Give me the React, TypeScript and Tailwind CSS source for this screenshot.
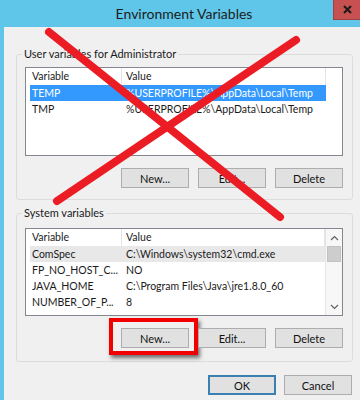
const UI = { fontFamily: 'Lato, "Noto Sans", sans-serif' };

type Row = { name: string; value: string; tone?: "selected" | "hover" };

const userRows: Row[] = [
  { name: "TEMP", value: "%USERPROFILE%\\AppData\\Local\\Temp", tone: "selected" },
  { name: "TMP", value: "%USERPROFILE%\\AppData\\Local\\Temp" },
];

const systemRows: Row[] = [
  { name: "ComSpec", value: "C:\\Windows\\system32\\cmd.exe", tone: "hover" },
  { name: "FP_NO_HOST_C...", value: "NO" },
  { name: "JAVA_HOME", value: "C:\\Program Files\\Java\\jre1.8.0_60" },
  { name: "NUMBER_OF_P...", value: "8" },
];

function WinButton({ label, focused, highlight }: { label: string; focused?: boolean; highlight?: boolean }) {
  return (
    <div className="relative shrink-0">
      <button
        className={
          "block h-[20px] w-[68px] bg-[#e1e1e1] text-[11px] leading-none text-[#111] " +
          (focused ? "border-2 border-[#3c7fb1]" : "border border-[#adadad]")
        }
        style={UI}
      >
        {label}
      </button>
      {highlight && (
        <div className="absolute -left-[12px] -top-[10px] -right-[9px] -bottom-[7px] border-[4px] border-[#f20000] shadow-[2px_3px_4px_rgba(0,0,0,0.55)]" />
      )}
    </div>
  );
}

function ListView({ rows, height, scroll }: { rows: Row[]; height: string; scroll?: boolean }) {
  return (
    <div className={"flex shrink-0 overflow-hidden border border-[#828790] bg-white " + height} style={UI}>
      <div className="flex-1 min-w-0">
        <div className="flex h-[17px] text-[10.5px] leading-[17px] text-[#1a1a1a]">
          <div className="w-[96px] shrink-0 pl-[6px] border-r border-[#e5e5e5]">Variable</div>
          <div className="flex-1 pl-[4px] border-r border-[#e5e5e5]">Value</div>
          {!scroll && <div className="w-[16px] shrink-0" />}
        </div>
        {rows.map((r) => (
          <div
            key={r.name}
            className={
              "flex h-[16px] ml-[4px] text-[10.5px] leading-[16px] " +
              (scroll ? "" : "mr-[16px] ") +
              (r.tone === "selected"
                ? "bg-[#3399ff] text-white"
                : r.tone === "hover"
                  ? "bg-[#e8e8e8] text-[#1a1a1a]"
                  : "text-[#1a1a1a]")
            }
          >
            <div className="w-[92px] shrink-0 overflow-hidden pl-[2px] whitespace-nowrap">{r.name}</div>
            <div className="flex-1 min-w-0 overflow-hidden pl-[4px] whitespace-nowrap">{r.value}</div>
          </div>
        ))}
      </div>
      {scroll && (
        <div className="w-[17px] shrink-0 flex flex-col bg-[#f7f7f7] border-l border-[#e5e5e5]">
          <div className="h-[17px] flex items-center justify-center">
            <svg width="9" height="6" viewBox="0 0 9 6">
              <path d="M1 5 L4.5 1.5 L8 5" fill="none" stroke="#606060" strokeWidth="1.2" />
            </svg>
          </div>
          <div className="h-[16px] mx-[1px] bg-[#cdcdcd] border border-[#c2c2c2]" />
          <div className="flex-1" />
          <div className="h-[17px] flex items-center justify-center">
            <svg width="9" height="6" viewBox="0 0 9 6">
              <path d="M1 1 L4.5 4.5 L8 1" fill="none" stroke="#606060" strokeWidth="1.2" />
            </svg>
          </div>
        </div>
      )}
    </div>
  );
}

function GroupBox({ title, children, className }: { title: string; children: React.ReactNode; className?: string }) {
  return (
    <div className={"relative shrink-0 rounded-[3px] border border-[#dcdcdc] pl-[8px] pr-[9px] " + (className ?? "")}>
      <span
        className="absolute -top-[8px] left-[5px] bg-[#f0f0f0] px-[2px] text-[11px] leading-[14px] text-[#1a1a1a]"
        style={UI}
      >
        {title}
      </span>
      {children}
    </div>
  );
}

export default function App() {
  return (
    <div className="relative flex h-[400px] w-[360px] flex-col overflow-hidden bg-[#5fc6e9]">
      {/* Title bar */}
      <div className="relative flex h-[27px] shrink-0 items-center justify-center pl-[8px]">
        <span className="text-[14px] text-[#1c1c1c]" style={UI}>
          Environment Variables
        </span>
        <div className="absolute right-0 top-0 flex h-[20px] w-[27px] items-center justify-center border-l border-b border-[#a34040] bg-[#c75050]">
          <svg width="9" height="9" viewBox="0 0 9 9">
            <path d="M1 1 L8 8 M8 1 L1 8" stroke="#1a1a1a" strokeWidth="2" />
          </svg>
        </div>
      </div>

      {/* Body */}
      <div className="ml-[4px] flex flex-1 flex-col bg-[#f0f0f0] pl-[12px] pr-[7px] pt-[27px]">
        <GroupBox title="User variables for Administrator" className="pt-[12px] pb-[11px]">
          <ListView rows={userRows} height="h-[89px]" />
          <div className="mt-[12px] flex justify-end gap-[9px]">
            <WinButton label="New..." />
            <WinButton label="Edit..." />
            <WinButton label="Delete" />
          </div>
        </GroupBox>

        <GroupBox title="System variables" className="mt-[13px] pt-[14px] pb-[13px]">
          <ListView rows={systemRows} height="h-[88px]" scroll />
          <div className="mt-[12px] flex justify-end gap-[9px]">
            <WinButton label="New..." highlight />
            <WinButton label="Edit..." />
            <WinButton label="Delete" />
          </div>
        </GroupBox>

        <div className="mt-[13px] flex shrink-0 justify-end gap-[8px] pr-[1px]">
          <WinButton label="OK" focused />
          <WinButton label="Cancel" />
        </div>
      </div>

      {/* Big red cross drawn over the dialog */}
      <svg className="pointer-events-none absolute left-0 top-0" width="360" height="400">
        <path d="M49 32 L280 217 M296 40 L57 201" stroke="#ec1c24" strokeWidth="8" strokeLinecap="round" />
      </svg>
    </div>
  );
}
